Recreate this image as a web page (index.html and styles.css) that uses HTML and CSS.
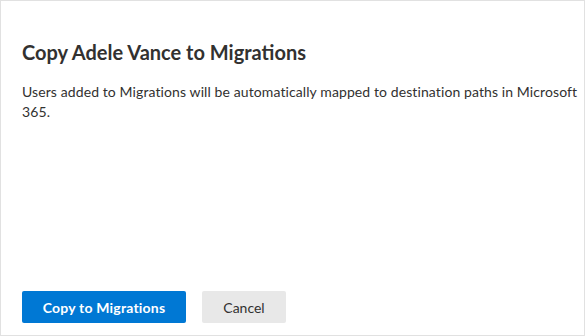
FILE: index.html
```html
<!DOCTYPE html>
<html lang="en">
<head>
    <meta charset="UTF-8">
    <title>Copy Adele Vance to Migrations</title>
    <link rel="stylesheet" href="styles.css">
</head>
<body>
    <div class="panel">
        <div class="content">
            <h1 class="title">Copy Adele Vance to Migrations</h1>
            <p class="desc">Users added to Migrations will be automatically mapped to destination paths in Microsoft 365.</p>
        </div>
        <div class="footer">
            <button class="btn primary">Copy to Migrations</button>
            <button class="btn">Cancel</button>
        </div>
    </div>
</body>
</html>
```

FILE: styles.css
```css
html, body {
    margin: 0;
    height: 100%;
}
body {
    font-family: Lato, 'Liberation Sans', sans-serif;
    color: #323130;
    background: #fff;
}
.panel {
    box-sizing: border-box;
    height: 336px;
    border: 1px solid #e1e1e1;
    padding: 0 2px 0 21px;
    display: flex;
    flex-direction: column;
}
.content {
    flex: 1;
    padding-top: 37px;
}
.title {
    margin: 0;
    font-size: 20px;
    font-weight: 700;
    line-height: 28px;
}
.desc {
    margin: 16px 0 0;
    font-size: 14px;
    line-height: 20px;
    letter-spacing: 0.1px;
}
.footer {
    display: flex;
    gap: 16px;
    padding-bottom: 12px;
}
.btn {
    height: 32px;
    padding: 0 16px;
    min-width: 84px;
    border: none;
    border-radius: 2px;
    background: #e8e8e8;
    color: #323130;
    font-family: inherit;
    font-size: 14px;
    white-space: nowrap;
}
.btn.primary {
    width: 164px;
    background: #0078d4;
    color: #fff;
    font-weight: 700;
    letter-spacing: 0.2px;
}
```
